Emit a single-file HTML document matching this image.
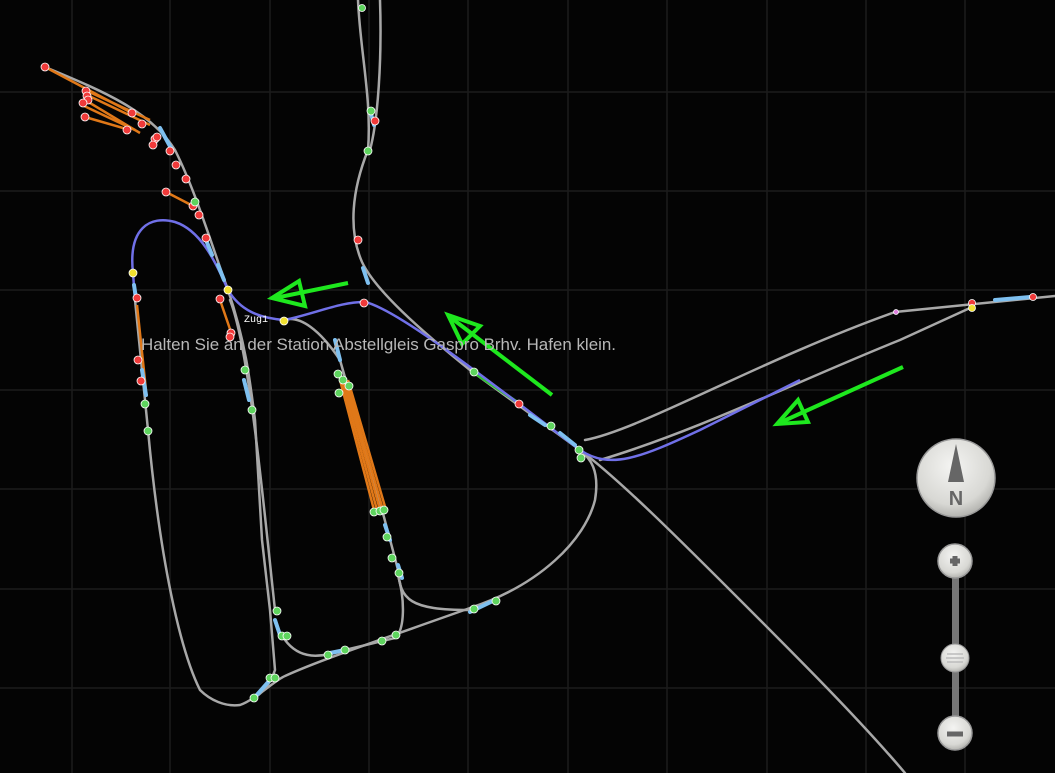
<!DOCTYPE html>
<html><head><style>
html,body{margin:0;padding:0;background:#040404;width:1055px;height:773px;overflow:hidden}
svg{display:block}
</style></head><body>
<svg width="1055" height="773" viewBox="0 0 1055 773" xmlns="http://www.w3.org/2000/svg">
<defs>
<radialGradient id="g1" cx="45%" cy="35%" r="70%"><stop offset="0" stop-color="#f4f4f2"/><stop offset="0.7" stop-color="#d8d8d4"/><stop offset="1" stop-color="#a8a8a4"/></radialGradient>
</defs>
<rect width="1055" height="773" fill="#040404"/>
<g stroke="#1c1c1c" stroke-width="1.5">
<line x1="72" y1="0" x2="72" y2="773"/><line x1="170" y1="0" x2="170" y2="773"/><line x1="270" y1="0" x2="270" y2="773"/><line x1="369" y1="0" x2="369" y2="773"/><line x1="468" y1="0" x2="468" y2="773"/><line x1="568" y1="0" x2="568" y2="773"/><line x1="667" y1="0" x2="667" y2="773"/><line x1="767" y1="0" x2="767" y2="773"/><line x1="866" y1="0" x2="866" y2="773"/><line x1="965" y1="0" x2="965" y2="773"/>
<line x1="0" y1="92" x2="1055" y2="92"/><line x1="0" y1="191" x2="1055" y2="191"/><line x1="0" y1="290" x2="1055" y2="290"/><line x1="0" y1="390" x2="1055" y2="390"/><line x1="0" y1="489" x2="1055" y2="489"/><line x1="0" y1="589" x2="1055" y2="589"/><line x1="0" y1="688" x2="1055" y2="688"/>
</g>
<g fill="none" stroke="#a8a8a8" stroke-width="2.5" stroke-linecap="round">
<path d="M358 0 C360 50 372 100 368 150 C352 190 348 230 362 262 C375 290 420 330 470 370 L580 450 C620 480 680 540 740 600 C800 660 860 720 905 773"/>
<path d="M380 0 C382 60 378 120 370 150"/>
<path d="M585 440 C640 430 760 360 895 312 L1055 296"/>
<path d="M600 460 C700 430 800 380 900 340 L970 308"/>
<path d="M45 67 C100 90 150 110 175 150 C195 190 210 240 228 290 C245 340 250 380 255 420 L262 540 L270 610 L275 670 C270 685 260 695 255 697"/>
<path d="M148 430 C160 560 180 650 200 690 C210 700 225 707 240 705 C255 700 275 680 285 676 C320 660 380 640 470 608 C540 585 585 540 595 500 C600 470 590 458 580 450"/>
<path d="M230 300 C250 350 265 520 275 610"/>
<path d="M284 320 C300 315 320 330 340 360 C360 430 380 500 398 570 C400 600 410 610 470 610"/>
<path d="M285 640 C300 660 320 658 345 650 L395 638 C405 630 405 600 398 575"/>
<path d="M135 300 L148 430"/>
</g>
<g fill="none" stroke="#e07818" stroke-width="2.5">
<path d="M45 67 L130 112"/><path d="M85 90 L150 120"/><path d="M87 95 L150 125"/><path d="M85 100 L140 133"/><path d="M82 105 L135 130"/><path d="M85 117 L130 130"/><path d="M166 192 L195 207"/>
<path d="M219 297 L232 335"/><path d="M137 305 L146 390"/>
<path d="M340 380 L374 510"/><path d="M342 380 L377 510"/><path d="M344 380 L380 510"/><path d="M346 380 L383 510"/><path d="M348 380 L386 510"/>
</g>
<path d="M473 372 L520 404" stroke="#30c030" stroke-width="3"/>
<path d="M135 300 L133 273 C128 228 150 215 175 222 C200 230 215 260 228 290 C240 310 258 318 285 320 C320 312 340 302 365 302 C400 310 500 390 580 450 C610 470 640 458 700 430 L800 380" fill="none" stroke="#7070e8" stroke-width="2.5"/>
<g stroke="#7ec0f0" stroke-width="4" stroke-linecap="round">
<path d="M370 110 L374 125"/><path d="M363 268 L368 283"/><path d="M206 240 L212 255"/><path d="M218 265 L224 280"/><path d="M134 285 L136 298"/><path d="M142 370 L146 395"/><path d="M244 380 L249 400"/><path d="M335 340 L340 360"/><path d="M385 525 L390 540"/><path d="M398 565 L402 578"/><path d="M470 612 L495 600"/><path d="M330 653 L345 650"/><path d="M255 697 L270 680"/><path d="M530 415 L545 425"/><path d="M560 433 L575 445"/><path d="M995 300 L1030 297"/><path d="M160 128 L172 150"/><path d="M275 620 L280 635"/>
</g>
<g stroke="#ffffff" stroke-width="0.8">
<g fill="#f03a3a">
<circle cx="45" cy="67" r="4"/><circle cx="86" cy="91" r="4"/><circle cx="87" cy="96" r="4"/><circle cx="88" cy="100" r="4"/><circle cx="83" cy="103" r="4"/><circle cx="85" cy="117" r="4"/><circle cx="132" cy="113" r="4"/><circle cx="142" cy="124" r="4"/><circle cx="127" cy="130" r="4"/><circle cx="155" cy="139" r="4"/><circle cx="153" cy="145" r="4"/><circle cx="157" cy="137" r="4"/><circle cx="170" cy="151" r="4"/><circle cx="176" cy="165" r="4"/><circle cx="186" cy="179" r="4"/><circle cx="166" cy="192" r="4"/><circle cx="193" cy="206" r="4"/><circle cx="199" cy="215" r="4"/><circle cx="206" cy="238" r="4"/><circle cx="137" cy="298" r="4"/><circle cx="220" cy="299" r="4"/><circle cx="231" cy="333" r="4"/><circle cx="230" cy="337" r="4"/><circle cx="138" cy="360" r="4"/><circle cx="141" cy="381" r="4"/><circle cx="375" cy="121" r="4"/><circle cx="358" cy="240" r="4"/><circle cx="364" cy="303" r="4"/><circle cx="519" cy="404" r="4"/><circle cx="972" cy="303" r="3.5"/><circle cx="1033" cy="297" r="3.5"/>
</g>
<g fill="#f0e030"><circle cx="133" cy="273" r="4"/><circle cx="228" cy="290" r="4"/><circle cx="284" cy="321" r="4"/><circle cx="972" cy="308" r="3.5"/></g>
<g fill="#5ed45e">
<circle cx="362" cy="8" r="3.5"/><circle cx="371" cy="111" r="4"/><circle cx="368" cy="151" r="4"/><circle cx="195" cy="202" r="4"/><circle cx="245" cy="370" r="4"/><circle cx="252" cy="410" r="4"/><circle cx="145" cy="404" r="4"/><circle cx="148" cy="431" r="4"/><circle cx="338" cy="374" r="4"/><circle cx="343" cy="380" r="4"/><circle cx="349" cy="386" r="4"/><circle cx="339" cy="393" r="4"/><circle cx="374" cy="512" r="4"/><circle cx="380" cy="511" r="4"/><circle cx="384" cy="510" r="4"/><circle cx="387" cy="537" r="4"/><circle cx="392" cy="558" r="4"/><circle cx="399" cy="573" r="4"/><circle cx="474" cy="609" r="4"/><circle cx="496" cy="601" r="4"/><circle cx="277" cy="611" r="4"/><circle cx="282" cy="636" r="4"/><circle cx="287" cy="636" r="4"/><circle cx="328" cy="655" r="4"/><circle cx="345" cy="650" r="4"/><circle cx="382" cy="641" r="4"/><circle cx="396" cy="635" r="4"/><circle cx="270" cy="678" r="4"/><circle cx="275" cy="678" r="4"/><circle cx="254" cy="698" r="4"/><circle cx="474" cy="372" r="4"/><circle cx="551" cy="426" r="4"/><circle cx="579" cy="450" r="4"/><circle cx="581" cy="458" r="4"/>
</g>
<circle cx="896" cy="312" r="2.5" fill="#e080e0"/>
</g>
<g fill="none" stroke="#1ee81e" stroke-width="4" stroke-linejoin="miter">
<path d="M348 283 L275 298"/><path d="M272 298 L299 281 L305 306 Z"/>
<path d="M552 395 L450 317"/><path d="M448 315 L480 326 L462 344 Z"/>
<path d="M903 367 L777 424"/><path d="M777 424 L798 400 L808 422 Z"/>
</g>
<text x="244" y="322" font-family="Liberation Mono, monospace" font-size="10" fill="#ffffff">Zug1</text>
<text x="141" y="350" font-family="Liberation Sans, sans-serif" font-size="17" textLength="475" lengthAdjust="spacingAndGlyphs" fill="#b8b8b8">Halten Sie an der Station Abstellgleis Gaspro Brhv. Hafen klein.</text>
<circle cx="956" cy="478" r="39" fill="url(#g1)" stroke="#999" stroke-width="1.5"/>
<path d="M956 444 L948 482 L964 482 Z" fill="#666"/>
<text x="956" y="505" text-anchor="middle" font-family="Liberation Sans, sans-serif" font-weight="bold" font-size="20" fill="#666">N</text>
<rect x="952" y="570" width="7" height="150" fill="#777"/>
<circle cx="955" cy="561" r="17" fill="url(#g1)" stroke="#999" stroke-width="1.5"/>
<path d="M950 561 h10 M955 556 v10" stroke="#666" stroke-width="5"/>
<circle cx="955" cy="658" r="14" fill="url(#g1)" stroke="#999"/>
<path d="M947 654 h16 M946 658 h18 M947 662 h16" stroke="#bbb" stroke-width="1.5"/>
<circle cx="955" cy="733" r="17" fill="url(#g1)" stroke="#999" stroke-width="1.5"/>
<path d="M947 734 h16" stroke="#666" stroke-width="5"/>
</svg>
</body></html>
